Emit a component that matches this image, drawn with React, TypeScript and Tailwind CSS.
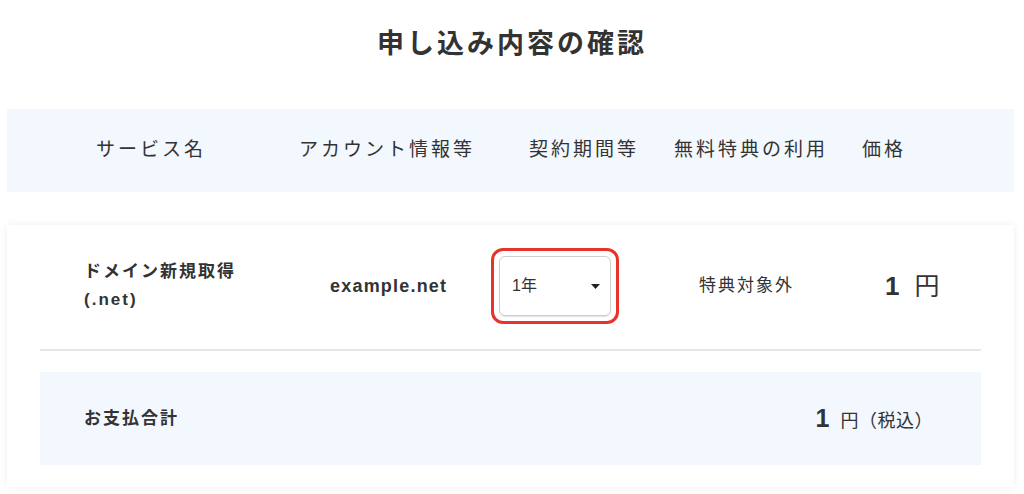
export default function App() {
  const font = { fontFamily: '"Liberation Sans", "Noto Sans CJK JP", sans-serif' };
  const headers = [
    { label: 'サービス名', w: 'w-[203px]' },
    { label: 'アカウント情報等', w: 'w-[230px]' },
    { label: '契約期間等', w: 'w-[145px]' },
    { label: '無料特典の利用', w: 'w-[188px]' },
    { label: '価格', w: 'flex-1' },
  ];

  return (
    <div className="min-h-screen w-[1024px] bg-white text-[#333]" style={font}>
      <div className="pt-[24px] pl-[7px] pr-[10px]">
        <h1 className="text-center text-[27px] leading-[40px] font-bold tracking-[3px] pl-[3px] text-[#333]">申し込み内容の確認</h1>

        <div className="mt-[45px] h-[83px] bg-[#f3f7fe] flex items-center pl-[89px]">
          {headers.map(h => (
            <div key={h.label} className={`${h.w} text-[19px] tracking-[3px] whitespace-nowrap text-[#333]`}>{h.label}</div>
          ))}
        </div>

        <div className="mt-[33px] bg-white shadow-[0_0_8px_rgba(0,0,0,0.07)] px-[33px] pt-[23px] pb-[22px]">
          <div className="flex items-center pl-[44px] h-[76px]">
            <div className="w-[246px] text-[17px] font-bold tracking-[2px] leading-[28px]">
              <div>ドメイン新規取得</div>
              <div>(.net)</div>
            </div>
            <div className="w-[161px] text-[18px] font-bold tracking-[1.2px]">example.net</div>
            <div className="w-[208px]">
              <div className="w-[128px] h-[76px] rounded-[12px] border-[3px] border-[#e8332c] p-[5px]">
                <div className="h-full rounded-[6px] border border-[#cfcfcf] shadow-[0_1px_1px_rgba(0,0,0,0.12)] flex items-center justify-between pl-[12px] pr-[10px]">
                  <span className="text-[16px]">1年</span>
                  <svg width="9" height="5" viewBox="0 0 9 5"><polygon points="0,0 9,0 4.5,5" fill="#222" /></svg>
                </div>
              </div>
            </div>
            <div className="w-[186px] text-[17px] tracking-[2px]">特典対象外</div>
            <div className="flex items-baseline">
              <span className="text-[26px] font-bold">1</span>
              <span className="text-[25px] ml-[15px]">円</span>
            </div>
          </div>

          <div className="mt-[25px] h-[2px] bg-[#e6e6e6]" />

          <div className="mt-[21px] h-[93px] bg-[#f3f7fe] flex items-center justify-between pl-[44px] pr-[48px]">
            <div className="text-[17px] font-bold tracking-[2px]">お支払合計</div>
            <div className="flex items-baseline">
              <span className="text-[25px] font-bold">1</span>
              <span className="text-[18px] ml-[11px] tracking-[0.5px]">円（税込）</span>
            </div>
          </div>
        </div>
      </div>
    </div>
  );
}
